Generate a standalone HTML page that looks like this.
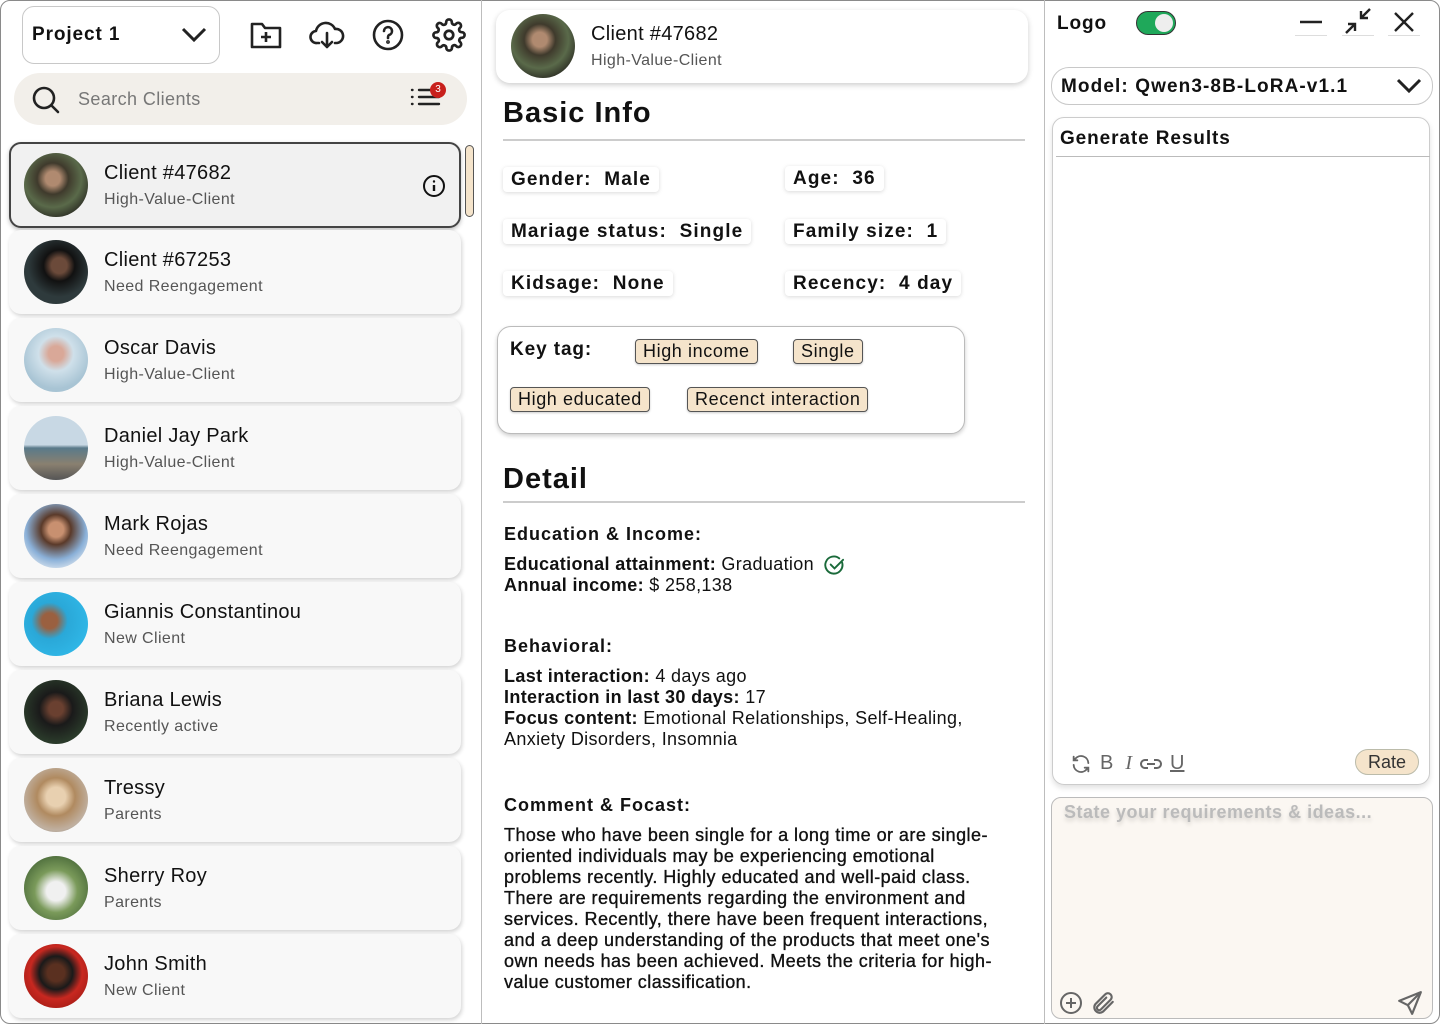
<!DOCTYPE html>
<html><head><meta charset="utf-8"><style>
*{box-sizing:border-box;margin:0;padding:0}
body{width:1440px;height:1024px;background:#fff;font-family:"Liberation Sans",sans-serif;color:#111;position:relative;overflow:hidden}
.a{position:absolute}
.frame{position:absolute;left:0;top:0;width:1440px;height:1024px;border:1.5px solid #8a8a8a;border-radius:10px}
.vl{position:absolute;top:0;width:1px;height:1024px;background:#bdbdbd}
.wide{font-family:"Liberation Sans",sans-serif;font-weight:bold;letter-spacing:.9px}
.card{position:absolute;left:9px;width:452px;height:84px;background:#f8f8f8;border-radius:12px;box-shadow:1px 2px 4px rgba(0,0,0,.18)}
.card .av{position:absolute;left:15px;top:10px;width:64px;height:64px;border-radius:50%}
.card .n{position:absolute;left:95px;top:19px;font-size:20px;color:#111;letter-spacing:.3px}
.card .s{position:absolute;left:95px;top:48px;font-size:16px;color:#555;letter-spacing:.4px}
.pill{position:absolute;background:#fff;border-radius:4px;box-shadow:0 1px 4px rgba(0,0,0,.15);height:25px;padding:0 8px;font-size:19px;line-height:25px;font-weight:bold;letter-spacing:1.1px;white-space:nowrap}
.tag{position:absolute;background:#f5e4cb;border:1px solid #555;border-radius:4px;height:25px;padding:0 7px;font-size:18px;line-height:23px;white-space:nowrap;letter-spacing:.6px;box-shadow:0 1px 2px rgba(0,0,0,.2)}
.txt{font-size:18px;line-height:21px;letter-spacing:.35px}
.h3{font-size:18px;font-weight:bold;letter-spacing:1px}
</style></head><body>
<div class="frame"></div>
<div class="vl" style="left:481px"></div>
<div class="vl" style="left:1044px"></div>

<!-- LEFT -->
<div class="a" style="left:22px;top:6px;width:198px;height:58px;border:1.5px solid #c8c8c8;border-radius:12px"></div>
<div class="a wide" style="left:32px;top:24px;font-size:19px">Project 1</div>
<svg class="a" style="left:180px;top:25px" width="28" height="20" viewBox="0 0 28 20"><path d="M3 4l11 11 11-11" fill="none" stroke="#222" stroke-width="3"/></svg>
<svg class="a" style="left:249px;top:20px" width="34" height="30" viewBox="0 0 34 30" fill="none" stroke="#222" stroke-width="2.6" stroke-linejoin="round"><path d="M3 4h10l3 4h15v19H3z"/><path d="M17 12v10M12 17h10"/></svg>
<svg class="a" style="left:309px;top:19px" width="36" height="32" viewBox="0 0 36 32" fill="none" stroke="#222" stroke-width="2.6" stroke-linecap="round" stroke-linejoin="round"><path d="M10 24H8a6 6 0 0 1-1-12 10 10 0 0 1 19-2 7 7 0 0 1 2 14h-2"/><path d="M18 14v14M13 23l5 5 5-5"/></svg>
<svg class="a" style="left:372px;top:19px" width="32" height="32" viewBox="0 0 32 32" fill="none" stroke="#222" stroke-width="2.6" stroke-linecap="round"><circle cx="16" cy="16" r="14"/><path d="M12 12a4 4 0 1 1 5 4c-1 .5-1 1.5-1 3"/><circle cx="16" cy="23" r=".6" fill="#222"/></svg>
<svg class="a" style="left:432px;top:18px" width="34" height="34" viewBox="0 0 24 24" fill="none" stroke="#222" stroke-width="1.9" stroke-linejoin="round"><circle cx="12" cy="12" r="3"/><path d="M19.4 15a1.7 1.7 0 0 0 .3 1.8l.1.1a2 2 0 1 1-2.8 2.8l-.1-.1a1.7 1.7 0 0 0-1.8-.3 1.7 1.7 0 0 0-1 1.5V21a2 2 0 1 1-4 0v-.1a1.7 1.7 0 0 0-1.1-1.5 1.7 1.7 0 0 0-1.8.3l-.1.1a2 2 0 1 1-2.8-2.8l.1-.1a1.7 1.7 0 0 0 .3-1.8 1.7 1.7 0 0 0-1.5-1H3a2 2 0 1 1 0-4h.1a1.7 1.7 0 0 0 1.5-1.1 1.7 1.7 0 0 0-.3-1.8l-.1-.1a2 2 0 1 1 2.8-2.8l.1.1a1.7 1.7 0 0 0 1.8.3H9a1.7 1.7 0 0 0 1-1.5V3a2 2 0 1 1 4 0v.1a1.7 1.7 0 0 0 1 1.5 1.7 1.7 0 0 0 1.8-.3l.1-.1a2 2 0 1 1 2.8 2.8l-.1.1a1.7 1.7 0 0 0-.3 1.8V9a1.7 1.7 0 0 0 1.5 1H21a2 2 0 1 1 0 4h-.1a1.7 1.7 0 0 0-1.5 1z"/></svg>

<div class="a" style="left:14px;top:73px;width:453px;height:52px;background:#f2efea;border-radius:26px"></div>
<svg class="a" style="left:31px;top:85px" width="30" height="30" viewBox="0 0 30 30" fill="none" stroke="#222" stroke-width="2.6" stroke-linecap="round"><circle cx="13" cy="13" r="10"/><path d="M21 21l6 6"/></svg>
<div class="a" style="left:78px;top:89px;font-size:18px;color:#777;letter-spacing:.4px">Search Clients</div>
<svg class="a" style="left:410px;top:86px" width="32" height="24" viewBox="0 0 32 24" stroke="#222" stroke-width="2.4" stroke-linecap="round"><path d="M2 4h.5M2 11h.5M2 18h.5M9 4h17M9 11h20M9 18h20"/></svg>
<div class="a" style="left:430px;top:82px;width:16px;height:16px;border-radius:50%;background:#c8201c;color:#fff;font-size:10px;text-align:center;line-height:16px">3</div>

<div class="card" style="top:142px;height:86px;background:#f1f1f1;border:2px solid #444;box-shadow:0 2px 4px rgba(0,0,0,.25)">
<div class="av" style="left:13px;top:9px;background:radial-gradient(circle at 45% 40%,#b08a70 0 14%,#3f3a2c 30%,#5a6a4a 55%,#2a2a22 80%)"></div>
<div class="n" style="left:93px;top:18px">Client #47682</div><div class="s" style="left:93px;top:47px">High-Value-Client</div>
<svg class="a" style="left:411px;top:30px" width="24" height="24" viewBox="0 0 24 24" fill="none" stroke="#111" stroke-width="2"><circle cx="12" cy="12" r="10"/><path d="M12 11v6" stroke-width="2.4"/><circle cx="12" cy="7.5" r="1.2" fill="#111" stroke="none"/></svg>
</div>
<div class="a" style="left:465px;top:145px;width:9px;height:72px;border:1.5px solid #555;background:#f5e4cb;border-radius:5px"></div>

<div class="card" style="top:230px"><div class="av" style="background:radial-gradient(circle at 55% 40%,#6b4a3a 0 15%,#111 30%,#2e3a3c 60%)"></div><div class="n">Client #67253</div><div class="s">Need Reengagement</div></div>
<div class="card" style="top:318px"><div class="av" style="background:radial-gradient(circle at 50% 40%,#d9a898 0 15%,#cfe0ea 35%,#a8c4d4 70%);"></div><div class="n">Oscar Davis</div><div class="s">High-Value-Client</div></div>
<div class="card" style="top:406px"><div class="av" style="background:linear-gradient(#c8d8e4 0 45%,#5a7a8a 50%,#8a8070 75%,#555 100%)"></div><div class="n">Daniel Jay Park</div><div class="s">High-Value-Client</div></div>
<div class="card" style="top:494px"><div class="av" style="background:radial-gradient(circle at 50% 40%,#c89070 0 15%,#5a3a2a 30%,#8ab0d8 60%,#e0e8f0 85%)"></div><div class="n">Mark Rojas</div><div class="s">Need Reengagement</div></div>
<div class="card" style="top:582px"><div class="av" style="background:radial-gradient(circle at 40% 45%,#9a6040 0 15%,#2aa8d8 35%,#30b8e8 80%)"></div><div class="n">Giannis Constantinou</div><div class="s">New Client</div></div>
<div class="card" style="top:670px"><div class="av" style="background:radial-gradient(circle at 50% 45%,#6a4030 0 15%,#1a1a1a 35%,#2a3a2a 70%)"></div><div class="n">Briana Lewis</div><div class="s">Recently active</div></div>
<div class="card" style="top:758px"><div class="av" style="background:radial-gradient(circle at 50% 45%,#e8d0b0 0 20%,#b08a60 40%,#c0b0a0 70%,#888 95%)"></div><div class="n">Tressy</div><div class="s">Parents</div></div>
<div class="card" style="top:846px"><div class="av" style="background:radial-gradient(circle at 50% 55%,#f0f0f0 0 20%,#7a9a5a 45%,#4a6a3a 80%)"></div><div class="n">Sherry Roy</div><div class="s">Parents</div></div>
<div class="card" style="top:934px"><div class="av" style="background:radial-gradient(circle at 50% 45%,#5a3020 0 18%,#1a1a1a 35%,#c82820 55%,#a01a14 85%)"></div><div class="n">John Smith</div><div class="s">New Client</div></div>

<!-- MIDDLE -->
<div class="a" style="left:496px;top:10px;width:532px;height:73px;background:#fff;border-radius:14px;box-shadow:0 2px 6px rgba(0,0,0,.2)"></div>
<div class="a" style="left:511px;top:14px;width:64px;height:64px;border-radius:50%;background:radial-gradient(circle at 45% 40%,#b08a70 0 14%,#3f3a2c 30%,#5a6a4a 55%,#2a2a22 80%)"></div>
<div class="a" style="left:591px;top:23px;font-size:20px;letter-spacing:.3px">Client #47682</div>
<div class="a" style="left:591px;top:52px;font-size:16px;color:#555;letter-spacing:.4px">High-Value-Client</div>

<div class="a" style="left:503px;top:97px;font-size:29px;font-weight:bold;letter-spacing:1px">Basic Info</div>
<div class="a" style="left:503px;top:139px;width:522px;height:2px;background:#ccc"></div>
<div class="pill" style="left:503px;top:167px">Gender:&nbsp; Male</div>
<div class="pill" style="left:785px;top:166px">Age:&nbsp; 36</div>
<div class="pill" style="left:503px;top:219px">Mariage status:&nbsp; Single</div>
<div class="pill" style="left:785px;top:219px">Family size:&nbsp; 1</div>
<div class="pill" style="left:503px;top:271px">Kidsage:&nbsp; None</div>
<div class="pill" style="left:785px;top:271px">Recency:&nbsp; 4 day</div>

<div class="a" style="left:497px;top:326px;width:468px;height:108px;background:#fff;border:1px solid #bbb;border-radius:14px;box-shadow:0 2px 4px rgba(0,0,0,.2)"></div>
<div class="a wide" style="left:510px;top:339px;font-size:19px">Key tag:</div>
<div class="tag" style="left:635px;top:339px">High income</div>
<div class="tag" style="left:793px;top:339px">Single</div>
<div class="tag" style="left:510px;top:387px">High educated</div>
<div class="tag" style="left:687px;top:387px">Recenct interaction</div>

<div class="a" style="left:503px;top:463px;font-size:29px;font-weight:bold;letter-spacing:1px">Detail</div>
<div class="a" style="left:503px;top:501px;width:522px;height:2px;background:#ccc"></div>

<div class="a h3" style="left:504px;top:524px">Education &amp; Income:</div>
<div class="a txt" style="left:504px;top:554px"><b>Educational attainment:</b> Graduation</div>
<svg class="a" style="left:824px;top:555px" width="21" height="21" viewBox="0 0 22 22" fill="none" stroke="#1a6a3a" stroke-width="2" stroke-linecap="round"><path d="M19 8a9 9 0 1 1-3-4.5"/><path d="M7 10l4 4 9-9"/></svg>
<div class="a txt" style="left:504px;top:575px"><b>Annual income:</b> $ 258,138</div>

<div class="a h3" style="left:504px;top:636px">Behavioral:</div>
<div class="a txt" style="left:504px;top:666px;width:500px"><b>Last interaction:</b> 4 days ago<br><b>Interaction in last 30 days:</b> 17<br><b>Focus content:</b> Emotional Relationships, Self-Healing,<br>Anxiety Disorders, Insomnia</div>

<div class="a h3" style="left:504px;top:795px">Comment &amp; Focast:</div>
<div class="a txt" style="left:504px;top:825px;width:530px;color:#111;-webkit-text-stroke:.35px #111;letter-spacing:.45px">Those who have been single for a long time or are single-<br>oriented individuals may be experiencing emotional<br>problems recently. Highly educated and well-paid class.<br>There are requirements regarding the environment and<br>services. Recently, there have been frequent interactions,<br>and a deep understanding of the products that meet one's<br>own needs has been achieved. Meets the criteria for high-<br>value customer classification.</div>

<!-- RIGHT -->
<div class="a wide" style="left:1057px;top:13px;font-size:19px">Logo</div>
<div class="a" style="left:1136px;top:11px;width:40px;height:24px;border-radius:12px;background:#1fa85a;border:1.5px solid #333"></div>
<div class="a" style="left:1155px;top:14px;width:18px;height:18px;border-radius:50%;background:#eee"></div>
<div class="a" style="left:1295px;top:35px;width:32px;height:1px;background:#ddd"></div>
<div class="a" style="left:1342px;top:35px;width:32px;height:1px;background:#ddd"></div>
<div class="a" style="left:1388px;top:35px;width:32px;height:1px;background:#ddd"></div>
<svg class="a" style="left:1298px;top:12px" width="26" height="20"><path d="M2 10h22" stroke="#222" stroke-width="2.4"/></svg>
<svg class="a" style="left:1343px;top:7px" width="30" height="28" viewBox="0 0 30 28" fill="none" stroke="#222" stroke-width="2.4"><path d="M27 2l-9 9M18 4v7h7M3 26l9-9M12 24v-7H5"/></svg>
<svg class="a" style="left:1392px;top:10px" width="24" height="24"><path d="M3 3l18 18M21 3L3 21" stroke="#222" stroke-width="2.4"/></svg>

<div class="a" style="left:1051px;top:67px;width:382px;height:38px;border:1.5px solid #c8c8c8;border-radius:18px"></div>
<div class="a wide" style="left:1061px;top:76px;font-size:19px;letter-spacing:1.1px">Model: Qwen3-8B-LoRA-v1.1</div>
<svg class="a" style="left:1396px;top:77px" width="26" height="18"><path d="M2 3l11 11 11-11" fill="none" stroke="#222" stroke-width="3"/></svg>

<div class="a" style="left:1052px;top:117px;width:378px;height:668px;border:1px solid #ccc;border-radius:12px;box-shadow:0 3px 6px rgba(0,0,0,.12)"></div>
<div class="a wide" style="left:1060px;top:128px;font-size:19px">Generate Results</div>
<div class="a" style="left:1056px;top:156px;width:374px;height:1px;background:#bbb"></div>
<div class="a" style="left:1070px;top:752px;font-size:20px;color:#666;display:flex;gap:8px;align-items:center">
<svg width="22" height="22" viewBox="0 0 24 24" fill="none" stroke="#666" stroke-width="2" stroke-linecap="round"><path d="M20 11a8 8 0 0 0-14-5l-2 2M4 4v4h4M4 13a8 8 0 0 0 14 5l2-2M20 20v-4h-4"/></svg>
<span style="font-size:20px">B</span><span style="font-size:20px;font-style:italic;font-family:'Liberation Serif',serif;margin-left:4px">I</span>
<svg width="22" height="14" viewBox="0 0 22 14" fill="none" stroke="#666" stroke-width="2"><path d="M8 3H5a4 4 0 0 0 0 8h3M14 3h3a4 4 0 0 1 0 8h-3M7 7h8"/></svg>
<span style="text-decoration:underline;font-size:20px">U</span></div>
<div class="a" style="left:1355px;top:749px;width:64px;height:26px;border-radius:13px;background:#f5e4cb;border:1px solid #bba;font-size:18px;text-align:center;line-height:24px;color:#333">Rate</div>

<div class="a" style="left:1051px;top:797px;width:382px;height:222px;background:#fbf7f2;border:1px solid #bbb;border-radius:10px"></div>
<div class="a" style="left:1064px;top:802px;font-size:18px;font-weight:bold;color:#bbb;letter-spacing:.5px;text-shadow:0 3px 4px rgba(0,0,0,.15)">State your requirements &amp; ideas...</div>
<svg class="a" style="left:1059px;top:991px" width="24" height="24" viewBox="0 0 24 24" fill="none" stroke="#666" stroke-width="2"><circle cx="12" cy="12" r="10"/><path d="M12 7v10M7 12h10"/></svg>
<svg class="a" style="left:1090px;top:990px" width="26" height="26" viewBox="0 0 24 24" fill="none" stroke="#666" stroke-width="2" stroke-linecap="round"><path d="M21 11l-9 9a5 5 0 0 1-7-7l9-9a3.5 3.5 0 0 1 5 5l-9 9a2 2 0 0 1-3-3l8-8"/></svg>
<svg class="a" style="left:1397px;top:990px" width="26" height="26" viewBox="0 0 24 24" fill="none" stroke="#666" stroke-width="2" stroke-linejoin="round"><path d="M22 2L2 10l8 4 4 8z"/><path d="M22 2L10 14"/></svg>
</body></html>
